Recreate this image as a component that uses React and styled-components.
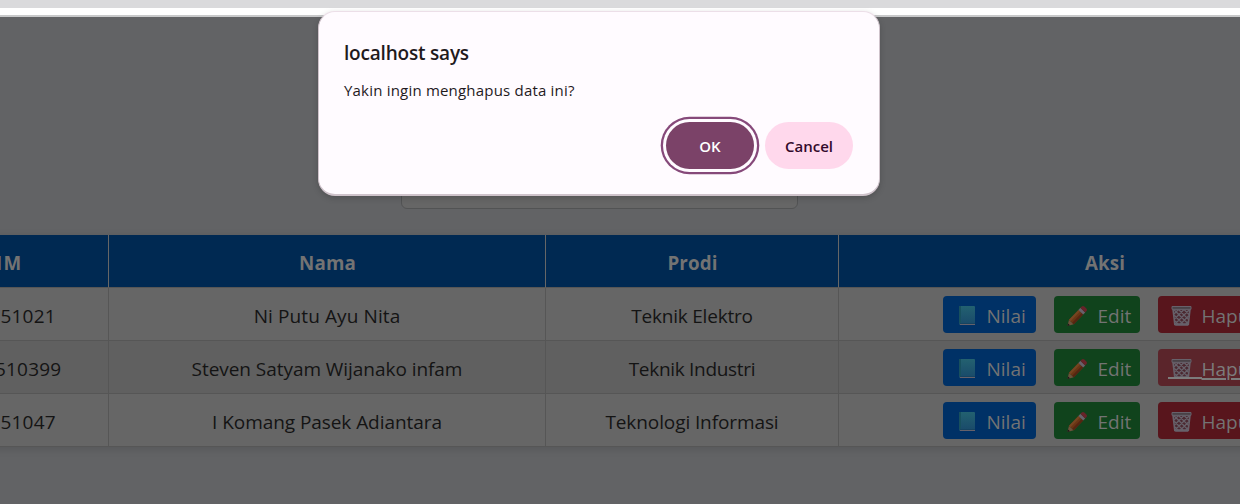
import React from "react";
import styled, { createGlobalStyle, css } from "styled-components";

const Global = createGlobalStyle`
  *, *::before, *::after { box-sizing: border-box; }
  body {
    margin: 0;
    overflow: hidden;
    background: #fff;
    font-family: "Open Sans", "Noto Sans", sans-serif;
  }
`;

const Window = styled.div`
  position: relative;
  display: flex;
  flex-direction: column;
  width: 1240px;
  height: 504px;
  overflow: hidden;
`;

const BrowserBar = styled.div`
  flex: none;
  height: 17px;
  background: #fff;
  border-top: 8px solid #dadadc;
  border-bottom: 2px solid #c8c9ca;
`;

const Page = styled.main`
  flex: 1;
  display: flex;
  flex-direction: column;
  align-items: flex-start;
  background: #626365;
`;

const SearchBox = styled.div`
  width: 397px;
  height: 52px;
  margin: 140px 0 26px 401px;
  background: #666;
  border: 1px solid #525354;
  border-radius: 6px;
`;

const Table = styled.div`
  width: 1478px;
  margin-left: -107px;
  box-shadow: 0 2px 8px rgba(0, 0, 0, 0.12);
`;

const Row = styled.div`
  display: grid;
  grid-template-columns: 216px 437px 293px 532px;
  height: 53px;
  color: #141414;
  background: ${(p) => (p.$striped ? "#606060" : "#666")};
  ${(p) =>
    p.$head &&
    css`
      color: #737373;
      background: #002952;
      font-weight: 700;
    `}
`;

const Cell = styled.div`
  display: flex;
  align-items: center;
  justify-content: center;
  padding-top: 3px;
  padding-left: ${(p) => (p.$head ? "1px" : "0")};
  border-right: 1px solid ${(p) => (p.$head ? "#666" : "#565656")};
  border-bottom: 1px solid #565656;
  font-size: ${(p) => (p.$head ? "18.8px" : "19px")};
  letter-spacing: ${(p) => p.$spacing || 0}px;
  white-space: nowrap;
`;

const Actions = styled(Cell)`
  gap: 18px;
  padding-top: 0;
`;

const tones = { blue: "#003166", green: "#10431c", red: "#58151c" };

const ActionButton = styled.a`
  position: relative;
  display: flex;
  align-items: center;
  width: ${(p) => p.$width}px;
  height: 37px;
  padding: 3px 0 0 10px;
  border-radius: 4px;
  color: ${(p) => (p.$hover ? "#7c7c7c" : "#737373")};
  background: ${(p) => (p.$hover ? "#5b252b" : tones[p.$tone])};
  font-size: 19px;
  svg {
    flex: none;
    margin: 0 7px 0 1px;
  }
  ${(p) =>
    p.$hover &&
    css`
      text-decoration: underline;
      text-decoration-thickness: 1.5px;
      text-underline-offset: 2px;
      &::before {
        content: "";
        position: absolute;
        left: 10px;
        top: 28px;
        width: 34px;
        height: 2px;
        background: #7c7c7c;
      }
    `}
`;

const Dialog = styled.section`
  position: absolute;
  left: 318px;
  top: 11px;
  width: 562px;
  height: 185px;
  display: flex;
  flex-direction: column;
  padding: 27px 26px 25px 25px;
  border: 1px solid #cfc3cb;
  border-top-color: #ecdfe8;
  border-bottom-width: 2px;
  border-radius: 17px;
  background: #fffbff;
  color: #1f1a1d;
  box-shadow: 0 2px 6px rgba(0, 0, 0, 0.18);
`;

const DialogTitle = styled.h1`
  margin: 0;
  font-size: 19px;
  line-height: 28px;
  font-weight: 600;
  letter-spacing: -0.2px;
`;

const DialogText = styled.p`
  margin: 12px 0 0;
  font-size: 15px;
  line-height: 22px;
  letter-spacing: 0.2px;
`;

const DialogButtons = styled.div`
  display: flex;
  justify-content: flex-end;
  gap: 11px;
  margin-top: auto;
`;

const DialogButton = styled.button`
  width: 88px;
  height: 47px;
  padding: 1px 0 0;
  border: 0;
  border-radius: 24px;
  color: ${(p) => (p.$primary ? "#fff" : "#330a2b")};
  background: ${(p) => (p.$primary ? "#7b4268" : "#ffd8ec")};
  box-shadow: ${(p) =>
    p.$primary ? "0 0 0 3px #fffbff, 0 0 0 5.3px #86497a" : "none"};
  font: 600 15px "Open Sans", "Noto Sans", sans-serif;
`;

const BookIcon = () => (
  <svg width="26" height="22" viewBox="0 0 26 22">
    <defs>
      <linearGradient id="cover" x1="0" y1="0" x2="0" y2="1">
        <stop offset="0" stopColor="#236170" />
        <stop offset="1" stopColor="#19496a" />
      </linearGradient>
    </defs>
    <path d="M5 1H20Q21 1 21 2V20H6Q5 20 5 19Z" fill="url(#cover)" />
    <path d="M5 1H7V18H5Z" fill="#18505e" />
    <path d="M6 18H21V20H6Z" fill="#164360" />
    <path d="M6 19.5H21" stroke="#66616a" strokeWidth="1" />
  </svg>
);

const PencilIcon = () => (
  <svg width="26" height="22" viewBox="0 0 26 22">
    <path d="M2.4 20.9L4 14.7L8.8 19.3Z" fill="#6b513b" />
    <path d="M4 14.7L13.4 4.9L18.2 9.6L8.8 19.3Z" fill="#693514" />
    <path d="M4 14.7L13.4 4.9L15 6.5L5.6 16.2Z" fill="#754521" />
    <path d="M7.2 17.8L16.6 8L18.2 9.6L8.8 19.3Z" fill="#552512" />
    <path d="M13.4 4.9L15.4 2.8L20.2 7.5L18.2 9.6Z" fill="#69616b" />
    <path d="M15.4 2.8L16.8 1.4Q18.1 .4 19.4 1.6L21.6 3.7Q22.6 4.9 21.5 6.1L20.2 7.5Z" fill="#682329" />
    <path d="M2.4 20.9L3 18.4L5 20.2Z" fill="#171517" />
  </svg>
);

const TrashIcon = () => (
  <svg width="26" height="22" viewBox="0 0 26 22" fill="none" stroke="#67616a">
    <path d="M4 4H21L19.3 19.5H5.8Z" fill="#4b2830" strokeWidth="1.6" />
    <path
      d="M5 9L9.5 4.5L19.6 14.6M5.5 14L15 4.5L20.3 9.8M6 19L20.3 4.7M11.5 19L19.8 10.7M5 4.7L19 18.7M5.2 10.3L14 19M5.8 16L9 19M16.8 19L19.4 16.5"
      strokeWidth="1.3"
    />
    <path d="M3 1.5H22V4.3H3Z" fill="#494247" strokeWidth="1" />
    <path d="M6.2 19.5H19" strokeWidth="2.4" />
  </svg>
);

const students = [
  { nim: "2205551021", name: "Ni Putu Ayu Nita", prodi: "Teknik Elektro", spacing: [0.1, -0.2] },
  { nim: "22055510399", name: "Steven Satyam Wijanako infam", prodi: "Teknik Industri", spacing: [-0.05, -0.3], active: true },
  { nim: "2205551047", name: "I Komang Pasek Adiantara", prodi: "Teknologi Informasi", spacing: [-0.06, -0.1] },
];

export default function App() {
  return (
    <>
      <Global />
      <Window>
        <BrowserBar />
        <Page>
          <SearchBox />
          <Table>
            <Row $head>
              {["NIM", "Nama", "Prodi", "Aksi"].map((t) => (
                <Cell $head key={t} $spacing={t === "NIM" ? 1.3 : 0.1}>{t}</Cell>
              ))}
            </Row>
            {students.map((s) => (
              <Row key={s.nim} $striped={s.active}>
                <Cell $spacing={0.2}>{s.nim}</Cell>
                <Cell $spacing={s.spacing[0]}>{s.name}</Cell>
                <Cell $spacing={s.spacing[1]}>{s.prodi}</Cell>
                <Actions>
                  <ActionButton $tone="blue" $width={93}><BookIcon />Nilai</ActionButton>
                  <ActionButton $tone="green" $width={86}><PencilIcon />Edit</ActionButton>
                  <ActionButton $tone="red" $width={109} $hover={s.active}><TrashIcon />Hapus</ActionButton>
                </Actions>
              </Row>
            ))}
          </Table>
        </Page>
        <Dialog>
          <DialogTitle>localhost says</DialogTitle>
          <DialogText>Yakin ingin menghapus data ini?</DialogText>
          <DialogButtons>
            <DialogButton $primary>OK</DialogButton>
            <DialogButton>Cancel</DialogButton>
          </DialogButtons>
        </Dialog>
      </Window>
    </>
  );
}
